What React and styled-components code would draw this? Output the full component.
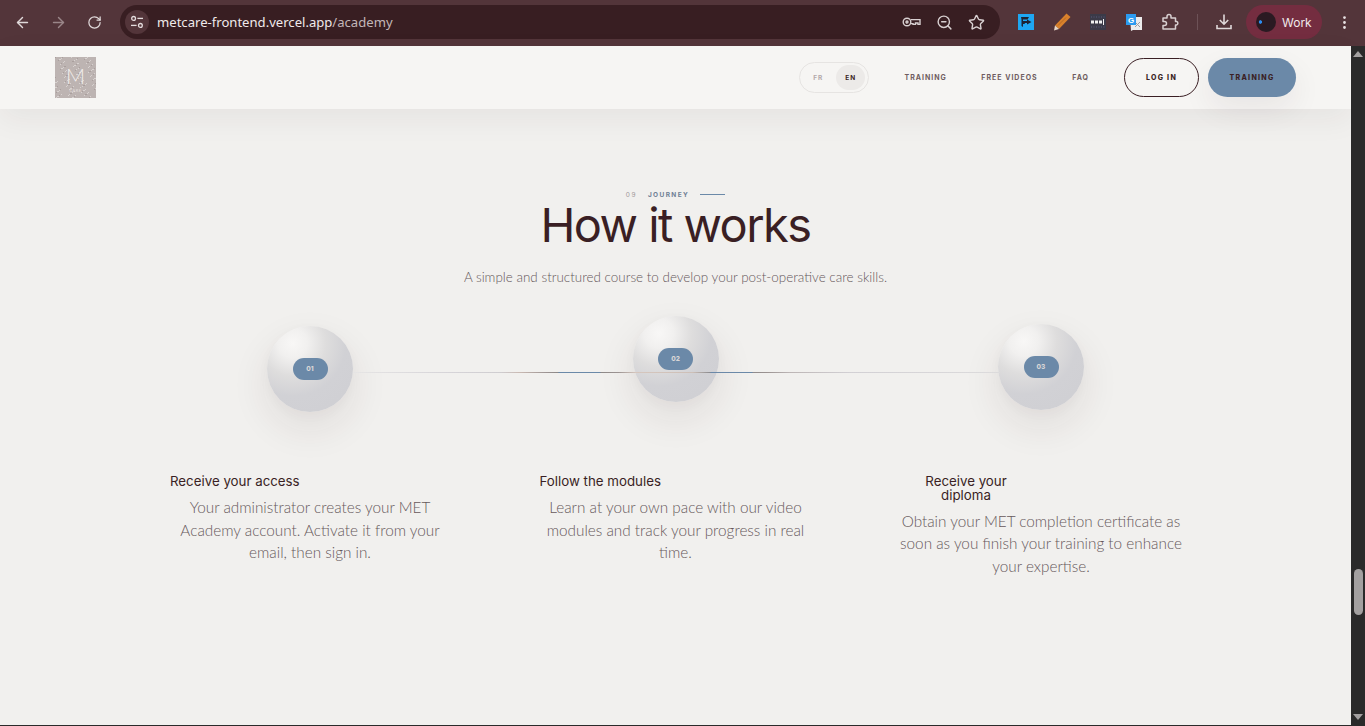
import styled, { createGlobalStyle } from 'styled-components';
import { ArrowLeft, ArrowRight, RotateCw, ZoomOut, Star, MoreVertical } from 'lucide-react';

const GlobalStyle = createGlobalStyle`
  html, body {
    margin: 0;
    padding: 0;
    height: 100%;
    overflow: hidden;
  }
  * {
    box-sizing: border-box;
  }
  body {
    font-family: "Lato", "Liberation Sans", sans-serif;
    background: #f1f0ee;
  }
`;

const steps = [
  {
    num: '01',
    lift: 10,
    indent: 2,
    title: 'Receive your access',
    text: 'Your administrator creates your MET Academy account. Activate it from your email, then sign in.',
  },
  {
    num: '02',
    lift: 0,
    indent: 6,
    title: 'Follow the modules',
    text: 'Learn at your own pace with our video modules and track your progress in real time.',
  },
  {
    num: '03',
    lift: 8,
    indent: 26,
    title: 'Receive your diploma',
    narrow: true,
    text: 'Obtain your MET completion certificate as soon as you finish your training to enhance your expertise.',
  },
];

// speckle of the logo image, same dots on every render
const logoDots = Array.from({ length: 150 }, (_, i) => ({
  x: (i * 37) % 41,
  y: (i * 23 + (i % 7) * 5) % 41,
  light: i % 3 !== 0,
}));

export default function App() {
  return (
    <>
      <GlobalStyle />
      <Window>
        <BrowserBar>
          <RoundBtn $dim={false}><ArrowLeft size={17} /></RoundBtn>
          <RoundBtn $dim={true}><ArrowRight size={17} /></RoundBtn>
          <RoundBtn $dim={false}><RotateCw size={15} /></RoundBtn>
          <UrlPill>
            <TuneBadge>
              <svg width="14" height="14" viewBox="0 0 14 14" fill="none" stroke="#e4dcdd" strokeWidth="1.3">
                <circle cx="3.6" cy="3.4" r="1.9" />
                <path d="M7.4 3.4H13" />
                <circle cx="10.4" cy="10.4" r="1.9" />
                <path d="M1 10.4H6.6" />
              </svg>
            </TuneBadge>
            <UrlText>metcare-frontend.vercel.app<span>/academy</span></UrlText>
            <UrlIcons>
              <svg width="19" height="12" viewBox="0 0 19 12" fill="none" stroke="#d8d0d1" strokeWidth="1.4">
                <circle cx="5" cy="6" r="3.8" />
                <circle cx="5" cy="6" r="1" />
                <path d="M8.8 3.6H18V8.4H16V7H13.5V8.4H11V7.6H8.8" />
              </svg>
              <ZoomOut size={17} color="#d8d0d1" />
              <Star size={17} color="#d8d0d1" />
            </UrlIcons>
          </UrlPill>
          <Extensions>
            <ExtIcon>
              <svg width="16" height="16" viewBox="0 0 16 16">
                <rect width="16" height="16" fill="#1ea7f2" />
                <path d="M3 3H11L9.5 5.5H5V7H9V5.5L13.5 8L9 10.5V9H7L6.5 10H5V13L3.5 12V5.5Z" fill="#1d2433" />
              </svg>
            </ExtIcon>
            <ExtIcon>
              <svg width="18" height="18" viewBox="0 0 18 18">
                <path d="M13.5 0.5L17.5 4L6 16L2 12.5Z" fill="#d9812c" />
                <path d="M13 4.5L5 12.5" stroke="#a85f1c" strokeWidth="0.7" />
                <path d="M2 12.5L6 16L1 17.5Z" fill="#e8d8c8" />
              </svg>
            </ExtIcon>
            <ExtIcon>
              <svg width="16" height="16" viewBox="0 0 16 16">
                <rect width="16" height="16" fill="#3b3a48" />
                <path d="M1 3H15M1 13H15" stroke="#5a5a78" strokeWidth="1" strokeDasharray="1 1.5" />
                <rect x="1" y="6.5" width="3" height="3" fill="#f0f0f0" />
                <rect x="5" y="6.5" width="3" height="3" fill="#f0f0f0" />
                <rect x="9" y="6.5" width="3" height="3" fill="#f0f0f0" />
                <rect x="13" y="5" width="1" height="6" fill="#f0f0f0" />
              </svg>
            </ExtIcon>
            <ExtIcon>
              <svg width="17" height="17" viewBox="0 0 17 17">
                <path d="M4 3H16V16H7L5 17Z" fill="#ececec" />
                <path d="M9 8L14 13M14 8L9 13" stroke="#9a9aa0" strokeWidth="1" />
                <rect x="0" y="0" width="10" height="11" fill="#2b9bf0" />
                <text x="2" y="8.5" fontSize="8" fontWeight="700" fill="#fff" fontFamily="Liberation Sans">G</text>
              </svg>
            </ExtIcon>
            <ExtIcon>
              <svg width="18" height="18" viewBox="0 0 18 18" fill="none" stroke="#d8d0d1" strokeWidth="1.5" strokeLinejoin="round">
                <path d="M2 5H6V3.5A2 2 0 0 1 10 3.5V5H14.5V8.5H15.5A1.8 1.8 0 0 1 15.5 12H14.5V16H2V12.5H3.5A1.8 1.8 0 0 0 3.5 8.5H2Z" />
              </svg>
            </ExtIcon>
          </Extensions>
          <BarDivider />
          <ExtIcon>
            <svg width="18" height="18" viewBox="0 0 18 18" fill="none" stroke="#e0d9da" strokeWidth="1.6">
              <path d="M9 1.5V11M4.8 7L9 11.2L13.2 7" />
              <path d="M2 12V15.5H16V12" />
            </svg>
          </ExtIcon>
          <ProfilePill>
            <Avatar />
            Work
          </ProfilePill>
          <MenuDots><MoreVertical size={17} color="#e8e2e3" /></MenuDots>
        </BrowserBar>

        <Viewport>
          <Page>
            <Nav>
              <Logo>
                <svg width="41" height="41" viewBox="0 0 41 41">
                  {logoDots.map((d, i) => (
                    <rect key={i} x={d.x} y={d.y} width="1" height="1" fill={d.light ? '#d8d2d0' : '#a99f9d'} />
                  ))}
                </svg>
                <LogoLetter>M</LogoLetter>
                <LogoSub>CARE</LogoSub>
              </Logo>
              <NavRight>
                <LangSwitch>
                  <LangOption $active={false}>FR</LangOption>
                  <LangOption $active={true}>EN</LangOption>
                </LangSwitch>
                <NavLinks>
                  <NavLink>TRAINING</NavLink>
                  <NavLink>FREE VIDEOS</NavLink>
                  <NavLink>FAQ</NavLink>
                </NavLinks>
                <NavButtons>
                  <LoginBtn>LOG IN</LoginBtn>
                  <TrainingBtn>TRAINING</TrainingBtn>
                </NavButtons>
              </NavRight>
            </Nav>

            <Section>
              <Eyebrow>
                <EyebrowNum>09</EyebrowNum>
                <EyebrowLabel>JOURNEY</EyebrowLabel>
                <EyebrowLine />
              </Eyebrow>
              <Heading>How it works</Heading>
              <Intro>A simple and structured course to develop your post-operative care skills.</Intro>

              <Steps>
                {steps.map((s) => (
                  <Step key={s.num}>
                    <OrbSlot>
                      <Orb $lift={s.lift}>
                        <OrbNum>{s.num}</OrbNum>
                      </Orb>
                    </OrbSlot>
                    <StepTitle $narrow={s.narrow} $indent={s.indent}>{s.title}</StepTitle>
                    <StepText>{s.text}</StepText>
                  </Step>
                ))}
                <TimeLine />
              </Steps>
            </Section>
          </Page>
          <Scrollbar>
            <ScrollArrow $up={true} />
            <ScrollTrack>
              <ScrollThumb />
            </ScrollTrack>
            <ScrollArrow $up={false} />
          </Scrollbar>
        </Viewport>
      </Window>
    </>
  );
}

const Window = styled.div`
  display: flex;
  flex-direction: column;
  width: 1365px;
  height: 726px;
  overflow: hidden;
  border-bottom: 1px solid #2a2a2a;
`;

const BrowserBar = styled.header`
  display: flex;
  align-items: center;
  height: 46px;
  flex: none;
  padding: 0 0 2px 4px;
  background: #53353a;
`;

const RoundBtn = styled.span`
  display: flex;
  justify-content: center;
  align-items: center;
  width: 36px;
  height: 34px;
  color: ${({ $dim }) => ($dim ? '#9a8689' : '#e0d9da')};
`;

const UrlPill = styled.div`
  display: flex;
  align-items: center;
  width: 880px;
  height: 34px;
  margin-left: 8px;
  padding: 0 15px 0 5px;
  border-radius: 17px;
  background: #381e22;
`;

const TuneBadge = styled.span`
  display: flex;
  justify-content: center;
  align-items: center;
  width: 24px;
  height: 24px;
  border-radius: 50%;
  background: #53353a;
`;

const UrlText = styled.span`
  flex: 1;
  margin-left: 8px;
  font-family: "Noto Sans", "Liberation Sans", sans-serif;
  font-size: 13.1px;
  color: #f0eaeb;

  span {
    color: #c3b6b8;
  }
`;

const UrlIcons = styled.div`
  display: flex;
  align-items: center;
  gap: 15px;
`;

const Extensions = styled.div`
  display: flex;
  align-items: center;
  gap: 18px;
  margin-left: 17px;
`;

const ExtIcon = styled.span`
  display: flex;
  justify-content: center;
  align-items: center;
  width: 18px;
  height: 18px;
`;

const BarDivider = styled.span`
  width: 1px;
  height: 16px;
  margin: 0 17px 0 18px;
  background: #6d5257;
`;

const ProfilePill = styled.div`
  display: flex;
  align-items: center;
  gap: 6px;
  height: 34px;
  margin-left: 13px;
  padding: 0 10px 0 10px;
  border-radius: 17px;
  font-family: "Inter", "Liberation Sans", sans-serif;
  font-size: 12px;
  color: #f0eaeb;
  background: #742d40;
`;

const Avatar = styled.span`
  width: 20px;
  height: 20px;
  border-radius: 50%;
  background: radial-gradient(circle at 22% 50%, #2b8cf0 1.4px, transparent 2px), #2a1a22;
`;

const MenuDots = styled.span`
  display: flex;
  margin-left: 14px;
`;

const Viewport = styled.div`
  display: flex;
  flex: 1;
  min-height: 0;
`;

const Page = styled.main`
  flex: 1;
  min-width: 0;
  background: #f1f0ee;
`;

const Nav = styled.nav`
  display: flex;
  justify-content: space-between;
  align-items: center;
  height: 63px;
  padding: 0 55px;
  background: #f6f5f3;
  box-shadow: 0 10px 30px rgba(58, 31, 36, 0.06);
`;

const Logo = styled.div`
  position: relative;
  display: flex;
  flex-direction: column;
  justify-content: center;
  align-items: center;
  width: 41px;
  height: 41px;
  background: #bdb4b2;

  svg {
    position: absolute;
    top: 0;
    left: 0;
  }
`;

const LogoLetter = styled.span`
  position: relative;
  font-family: "Lato", sans-serif;
  font-size: 21px;
  font-weight: 300;
  line-height: 25px;
  color: #f2eeec;
`;

const LogoSub = styled.span`
  position: relative;
  font-family: "Lato", sans-serif;
  font-size: 4px;
  line-height: 5px;
  letter-spacing: 0.5px;
  color: #e4dfdd;
`;

const NavRight = styled.div`
  display: flex;
  align-items: center;
`;

const LangSwitch = styled.div`
  display: flex;
  align-items: center;
  gap: 3px;
  width: 70px;
  height: 31px;
  padding: 0 3px;
  border: 1px solid #e6e4e2;
  border-radius: 16px;
`;

const LangOption = styled.span`
  display: flex;
  justify-content: center;
  align-items: center;
  width: 31px;
  height: 25px;
  border-radius: 13px;
  font-family: "Inter", sans-serif;
  font-size: 6.5px;
  font-weight: 700;
  letter-spacing: 1px;
  color: ${({ $active }) => ($active ? '#3a1f24' : '#b3a9aa')};
  background: ${({ $active }) => ($active ? '#eceae8' : 'transparent')};
`;

const NavLinks = styled.div`
  display: flex;
  align-items: center;
  gap: 34.5px;
  margin-left: 35px;
`;

const NavLink = styled.a`
  font-family: "Inter", sans-serif;
  font-size: 7px;
  font-weight: 700;
  letter-spacing: 1px;
  color: #6f5d60;
`;

const NavButtons = styled.div`
  display: flex;
  gap: 9px;
  margin-left: 35px;
`;

const LoginBtn = styled.button`
  width: 75px;
  height: 39px;
  border: 1px solid #3a1f24;
  border-radius: 20px;
  font-family: "Inter", sans-serif;
  font-size: 7px;
  font-weight: 800;
  letter-spacing: 1.3px;
  color: #3a1f24;
  background: transparent;
`;

const TrainingBtn = styled.button`
  width: 88px;
  height: 39px;
  border: 0;
  border-radius: 20px;
  font-family: "Inter", sans-serif;
  font-size: 7px;
  font-weight: 800;
  letter-spacing: 1.3px;
  color: #3a1f24;
  background: #6b89a8;
  box-shadow: 0 12px 30px rgba(58, 31, 36, 0.07);
`;

const Section = styled.section`
  display: flex;
  flex-direction: column;
  align-items: center;
  padding-top: 79px;
`;

const Eyebrow = styled.div`
  display: flex;
  align-items: center;
  height: 13px;
`;

const EyebrowNum = styled.span`
  font-family: "Inter", sans-serif;
  font-size: 6.5px;
  letter-spacing: 1.5px;
  color: #a09799;
`;

const EyebrowLabel = styled.span`
  margin-left: 11px;
  font-family: "Inter", sans-serif;
  font-size: 6.5px;
  font-weight: 700;
  letter-spacing: 1.4px;
  color: #6f7f95;
`;

const EyebrowLine = styled.span`
  width: 25px;
  height: 1px;
  margin-left: 11px;
  background: #6b89a8;
`;

const Heading = styled.h1`
  margin: -1px 0 0;
  font-family: "Inter", sans-serif;
  font-size: 47px;
  font-weight: 400;
  line-height: 50px;
  letter-spacing: -1.55px;
  color: #3a1f24;
`;

const Intro = styled.p`
  margin: 17px 0 0;
  font-family: "Lato", sans-serif;
  font-size: 13.45px;
  font-weight: 300;
  line-height: 20px;
  color: #66585b;
`;

const Steps = styled.div`
  position: relative;
  display: grid;
  grid-template-columns: repeat(3, 284px);
  column-gap: 81.5px;
  margin-top: 29px;
`;

const TimeLine = styled.span`
  position: absolute;
  top: 56px;
  left: 185px;
  width: 647px;
  height: 1px;
  background: linear-gradient(
    90deg,
    #e6e5e5 0,
    #d6d4d8 15%,
    #cfcdd0 22.7%,
    #c9b9b2 25.8%,
    #9b9392 30%,
    #8d8886 31.7%,
    #6b89a8 31.8%,
    #6b89a8 38.2%,
    #8d8886 38.3%,
    #9b9392 41%,
    #d6c6bd 43.7%,
    #cdbfb7 52.5%,
    #8a8a8e 55.2%,
    #6b89a8 55.3%,
    #6b89a8 61.7%,
    #8f8a8a 61.8%,
    #9b9392 64%,
    #bcb5b5 67.5%,
    #d2d0d4 76.8%,
    #dcdbdc 100%
  );
`;

const Step = styled.article`
  display: flex;
  flex-direction: column;
  align-items: stretch;
`;

const OrbSlot = styled.div`
  display: flex;
  justify-content: center;
  height: 159px;
`;

const Orb = styled.div`
  display: flex;
  justify-content: center;
  align-items: center;
  width: 86px;
  height: 86px;
  margin-top: ${({ $lift }) => $lift}px;
  border-radius: 50%;
  background: radial-gradient(circle at 30% 20%, #f8f7f6 0, #f1f0ef 16%, #dedddd 36%, #d1d1d5 58%, #cfcfd3 100%);
  box-shadow: 0 16px 34px 6px rgba(58, 31, 36, 0.065), 0 4px 12px rgba(58, 31, 36, 0.03);
`;

const OrbNum = styled.span`
  display: flex;
  justify-content: center;
  align-items: center;
  width: 35px;
  height: 22px;
  border-radius: 11px;
  font-family: "Inter", sans-serif;
  font-size: 6.5px;
  font-weight: 800;
  color: #d8d6d6;
  background: #6b89a8;
`;

const StepTitle = styled.h3`
  width: ${({ $narrow }) => ($narrow ? '82px' : 'auto')};
  margin: 0 0 0 ${({ $indent }) => $indent}px;
  font-family: "Inter", sans-serif;
  font-size: 13.3px;
  font-weight: 400;
  line-height: 13.5px;
  text-align: ${({ $narrow }) => ($narrow ? 'center' : 'left')};
  color: #3a1f24;
`;

const StepText = styled.p`
  margin: 7.5px 0 0;
  font-family: "Lato", sans-serif;
  font-size: 15.3px;
  font-weight: 300;
  line-height: 22.5px;
  text-align: center;
  color: #66585b;
`;

const Scrollbar = styled.aside`
  display: flex;
  flex-direction: column;
  align-items: center;
  width: 14px;
  height: 100%;
  flex: none;
  background: #2a2a2a;
`;

const ScrollArrow = styled.span`
  width: 0;
  height: 0;
  margin: 5px 0;
  border-left: 5px solid transparent;
  border-right: 5px solid transparent;
  border-${({ $up }) => ($up ? 'bottom' : 'top')}: 6px solid #a3a0a0;
`;

const ScrollTrack = styled.div`
  flex: 1;
  width: 100%;
  padding-top: 507px;
`;

const ScrollThumb = styled.div`
  width: 9px;
  height: 46px;
  margin: 0 auto;
  border-radius: 5px;
  background: #a3a0a0;
`;
